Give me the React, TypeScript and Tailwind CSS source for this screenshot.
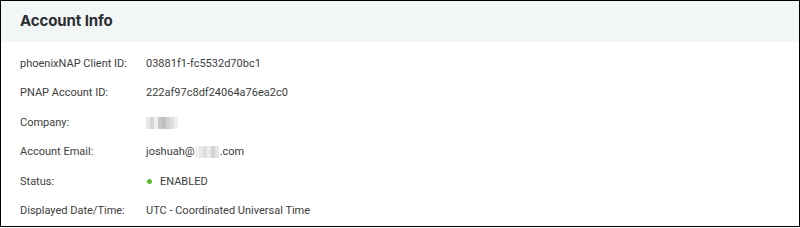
import React from "react";

const Blur = ({ cells }: { cells: string[] }) => (
  <span className="inline-flex h-[12px] align-middle">
    {cells.map((c, i) => (
      <span key={i} className="w-[4px] h-full" style={{ backgroundColor: c }} />
    ))}
  </span>
);

const rows: { label: string; value: React.ReactNode }[] = [
  { label: "phoenixNAP Client ID:", value: "03881f1-fc5532d70bc1" },
  { label: "PNAP Account ID:", value: "222af97c8df24064a76ea2c0" },
  {
    label: "Company:",
    value: (
      <Blur cells={["#e8e8e8", "#d6d6d6", "#eeeeee", "#c8c8c8", "#c0c0c0", "#d2d2d2", "#dedede", "#efefef"]} />
    ),
  },
  {
    label: "Account Email:",
    value: (
      <span className="inline-flex items-center">
        joshuah@
        <Blur cells={["#f3f3f3", "#e8e8e8", "#dedede", "#ececec", "#d2d2d2", "#e6e6e6"]} />
        <span className="ml-[1px]">.com</span>
      </span>
    ),
  },
  {
    label: "Status:",
    value: (
      <span className="inline-flex items-center">
        <span className="w-[5px] h-[5px] rounded-full bg-[#5cbb2d] ml-[1px] mr-[8px]" />
        ENABLED
      </span>
    ),
  },
  { label: "Displayed Date/Time:", value: "UTC - Coordinated Universal Time" },
];

export default function App() {
  return (
    <div className="w-[800px] h-[228px] bg-white">
      <div className="w-[800px] h-[227px] border border-black bg-white flex flex-col">
        <div className="h-[41px] bg-[#f3f6f7] flex items-center pl-[19px]">
          <span
            className="text-[15px] font-bold text-[#2b2d31] tracking-[-0.1px]"
            style={{ fontFamily: "Inter, 'Noto Sans', sans-serif" }}
          >
            Account Info
          </span>
        </div>
        <div
          className="pt-[7px] pl-[19px] text-[11px] text-[#3d3d3d]"
          style={{ fontFamily: "Roboto, 'Liberation Sans', sans-serif" }}
        >
          {rows.map((r) => (
            <div key={r.label} className="flex items-center h-[29.5px]">
              <div className="w-[126px]">{r.label}</div>
              <div>{r.value}</div>
            </div>
          ))}
        </div>
      </div>
    </div>
  );
}
